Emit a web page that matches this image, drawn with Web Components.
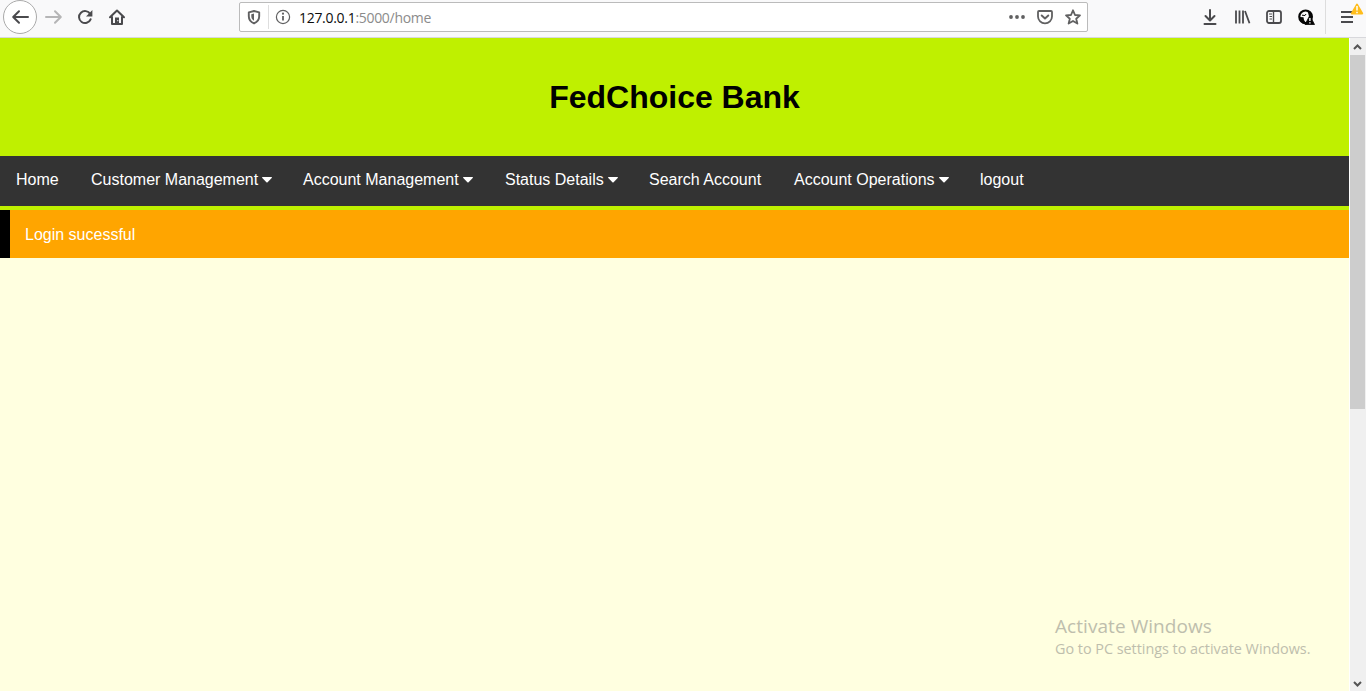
<!DOCTYPE html>
<html lang="en">
<head>
<meta charset="utf-8">
<title>FedChoice Bank</title>
<style>
html,body{margin:0;height:100%;overflow:hidden}
body{font:16px "Liberation Sans",Arial,sans-serif}
</style>
</head>
<body>
<browser-window></browser-window>
<script>
const define = (name, html) => customElements.define(name, class extends HTMLElement {
  constructor() {
    super();
    const t = document.createElement('template');
    t.innerHTML = html;
    this.attachShadow({mode: 'open'}).append(t.content.cloneNode(true));
  }
});

const icons = {
  back: '<path d="M16 8H1.5M7 2.2 1.2 8 7 13.8" stroke-width="2" stroke-linecap="round" stroke-linejoin="round"/>',
  forward: '<path d="M1 8h14.5M10 2.2 15.8 8 10 13.8" stroke-width="2" stroke-linecap="round" stroke-linejoin="round"/>',
  reload: '<path d="M13.2 5A6 6 0 1 0 13.6 10.3" stroke-width="2" stroke-linecap="round"/><path d="M15.4 1v6.5H9z" fill="currentColor" stroke="none"/>',
  home: '<path d="M1 8.3 8 1.5l7 6.8M3 8v7h10V8" stroke-width="2" stroke-linecap="round" stroke-linejoin="round"/><path fill-rule="evenodd" d="M6 14.500V8.500h4v6zM8.300 11v1.300h1V11z" fill="currentColor" stroke="none"/>',
  shield: '<path d="M8 2 13.200 3.300v3.900c0 3.600-2 5.800-5.200 7.200-3.200-1.400-5.200-3.600-5.200-7.200V3.300z" stroke-width="1.900" stroke-linejoin="round"/><path d="M8 4.600v7.200C6 10.600 5.300 9 5.300 7V5.300z" fill="currentColor" stroke="none"/>',
  info: '<circle cx="8" cy="8" r="6.600" stroke-width="1.200"/><path d="M8 7v4.500" stroke-width="1.800"/><circle cx="8" cy="4.700" r="1.100" fill="currentColor" stroke="none"/>',
  dots: '<g fill="currentColor" stroke="none"><circle cx="2" cy="8" r="1.900"/><circle cx="8" cy="8" r="1.900"/><circle cx="14" cy="8" r="1.900"/></g>',
  pocket: '<path d="M2 2h12q1 0 1 1v4.500a7 6.800 0 0 1-14 0V3q0-1 1-1z" stroke-width="1.800"/><path d="m4.700 6.500 3.300 3 3.300-3" stroke-width="1.900" stroke-linecap="round" stroke-linejoin="round"/>',
  star: '<path d="m8 1.300 2 4.700 5 .4-3.800 3.300 1.200 4.900L8 12l-4.400 2.600 1.200-4.900L1 6.400 6 6z" stroke-width="1.800" stroke-linejoin="round"/>',
  download: '<path d="M8 1v10M3.500 7 8 11.500 12.500 7M2.500 15h11" stroke-width="2" stroke-linecap="round" stroke-linejoin="round"/>',
  library: '<path d="M2 1.500v13M5.500 1.500v13M9 1.500v13M11 2l4.500 12.300" stroke-width="1.800"/>',
  sidebar: '<rect x="1" y="2" width="14" height="12" rx="2" stroke-width="1.800"/><path d="M7.500 2v12" stroke-width="1.400"/><path d="M3 5h3M3.500 7.500H6M3.500 10H6" stroke-width="1"/>',
  account: '<circle cx="7.600" cy="7.800" r="6.300" stroke="#050505" stroke-width="2.200"/><path d="M1.500 8 5.500 8.300 6 11l2 3-3 .5Q1.500 12.500 1.500 8zM8.500 2l5 2-.5 4-2-.5-1-4z" fill="#050505" stroke="none"/><path d="M4 6.200 7 6.500 8 5" stroke="#050505" stroke-width="1"/><path d="M11.800 6.500 16.500 15.500h-9.500z" fill="#050505" stroke="#050505" stroke-width=".8"/><path d="M11.900 9v3M11.900 13.300v1.200" stroke="#fff" stroke-width="1.400"/>',
  menu: '<path d="M1 3h12M1 8h12M1 13h12" stroke-width="1.900"/>',
  warning: '<path d="M8 2 15 14H1z" fill="#ffbd1b" stroke="#ffbd1b" stroke-width="2.500" stroke-linejoin="round"/><path d="M8 4v6M8 11.500v2" stroke="#fff" stroke-width="2"/>'
};

customElements.define('line-icon', class extends HTMLElement {
  connectedCallback() {
    if (this.shadowRoot) return;
    this.attachShadow({mode: 'open'}).innerHTML = `<style>:host{display:block;width:16px;height:16px;flex:none}svg{display:block;width:100%;height:100%;overflow:visible}</style>
    <svg viewBox="0 0 16 16" fill="none" stroke="currentColor">${icons[this.getAttribute('name')]}</svg>`;
  }
});

define('address-bar', `<style>
:host{display:flex;align-items:center;box-sizing:border-box;width:849px;height:30px;margin-top:2px;padding:0 6px;border:1px solid #bbb;border-radius:2px;background:#fff;color:#606061;flex:none}
.sep{width:1px;height:24px;background:#dedede;margin:0 6px 0 6px}
.url{font:14px/20px "Open Sans",sans-serif;color:#8b8b8b;margin-left:8px;padding-top:2px;flex:1;white-space:pre;letter-spacing:-.3px}
b{font-weight:400;color:#0c0c0d}
.tools{display:flex;gap:12px}
</style><line-icon name="shield"></line-icon><div class="sep"></div><line-icon name="info"></line-icon>
<div class="url"><b>127.0.0.1</b>:5000/home</div>
<div class="tools"><line-icon name="dots"></line-icon><line-icon name="pocket"></line-icon><line-icon name="star"></line-icon></div>`);

define('browser-toolbar', `<style>
:host{display:flex;align-items:flex-start;box-sizing:border-box;height:38px;background:#f9f9fa;border-bottom:1px solid #d8d8dc;color:#4a4a4d}
line-icon{margin-top:9px}
.back{display:grid;place-items:center;box-sizing:border-box;width:34px;height:34px;border:1px solid #aaa;border-radius:50%;background:#fff;margin-left:3px}
.back line-icon{margin:0}
.forward{color:#b5b5b6;margin-left:8px}.reload{margin-left:16px}.home{margin-left:16px}
address-bar{margin-left:114px}
.tools{display:flex;gap:16px;margin-left:114px}
.menu{position:relative;box-sizing:border-box;border-left:1px solid #ddd;height:34px;margin-left:11px;padding-left:14px;width:41px}
.menu .warn{position:absolute;left:25px;top:-6px;width:12px;height:12px}
</style><div class="back"><line-icon name="back"></line-icon></div><line-icon class="forward" name="forward"></line-icon><line-icon class="reload" name="reload"></line-icon><line-icon class="home" name="home"></line-icon>
<address-bar></address-bar><div class="tools"><line-icon name="download"></line-icon><line-icon name="library"></line-icon><line-icon name="sidebar"></line-icon><line-icon name="account"></line-icon></div>
<div class="menu"><line-icon name="menu"></line-icon><line-icon class="warn" name="warning"></line-icon></div>`);

define('scroll-bar', `<style>
:host{display:flex;flex-direction:column;box-sizing:border-box;width:17px;background:#f0f0f0;border-left:1px solid #fff;flex:none}
svg{display:block;width:15px;height:17px;flex:none}.thumb{width:15px;height:354px;background:#cdcdcd}.space{flex:1}
path{fill:none;stroke:#555;stroke-width:2}
</style><svg viewBox="0 0 15 17"><path d="m4 11 3.500-3.500L11 11"/></svg><div class="thumb"></div><div class="space"></div><svg viewBox="0 0 15 17"><path d="m4 8 3.500 3.500L11 8"/></svg>`);

customElements.define('nav-item', class extends HTMLElement {
  connectedCallback() {
    if (this.shadowRoot) return;
    this.attachShadow({mode: 'open'}).innerHTML = `<style>:host{display:flex;align-items:center;box-sizing:border-box;height:50px;padding:0 0 3px 16px;color:#fff;font:16px "Liberation Sans",Arial,sans-serif;white-space:nowrap}
    svg{display:block;width:10px;height:6px;margin:1px 0 0 4px}</style><slot></slot>${this.hasAttribute('menu') ? '<svg viewBox="0 0 10 6"><path fill="#fff" d="M.5 0h9q.8.4.2 1L5.600 5.300q-.6.500-1.200 0L.3 1Q-.3.4.5 0z"/></svg>' : ''}`;
  }
});

define('bank-nav', `<style>:host{display:flex;height:50px;background:#333}</style>
<nav-item style="width:75px">Home</nav-item><nav-item menu style="width:212px">Customer Management</nav-item><nav-item menu style="width:202px">Account Management</nav-item><nav-item menu style="width:144px">Status Details</nav-item><nav-item style="width:145px">Search Account</nav-item><nav-item menu style="width:186px">Account Operations</nav-item><nav-item>logout</nav-item>`);

define('bank-header', `<style>:host{display:flex;align-items:center;justify-content:center;height:118px;background:#bff000}h1{margin:0;font:bold 32px/37px "Liberation Sans",Arial,sans-serif;color:#000}</style><h1><slot></slot></h1>`);

define('flash-message', `<style>:host{display:block;box-sizing:border-box;height:48px;margin-top:4px;padding:16px 15px 14px;border-left:10px solid #000;background:#ffa500;color:#fff;line-height:18px}</style><slot></slot>`);

define('activation-note', `<style>:host{position:absolute;left:1055px;bottom:32px;color:#bebead;font-family:"Open Sans",sans-serif;white-space:nowrap}
div{font-size:19px;line-height:26px;letter-spacing:.06px}p{margin:0;font-size:14.400px;line-height:20px;letter-spacing:-.02px}</style><div>Activate Windows</div><p>Go to PC settings to activate Windows.</p>`);

define('bank-page', `<style>:host{display:block;flex:1;background:#ffffe0}.top{background:#bff000}</style>
<div class="top"><bank-header>FedChoice Bank</bank-header><bank-nav></bank-nav><flash-message>Login sucessful</flash-message></div><activation-note></activation-note>`);

define('browser-window', `<style>:host{display:flex;flex-direction:column;position:relative;width:1366px;height:691px;overflow:hidden}.view{display:flex;flex:1;min-height:0}</style><browser-toolbar></browser-toolbar><div class="view"><bank-page></bank-page><scroll-bar></scroll-bar></div>`);
</script>
</body>
</html>
